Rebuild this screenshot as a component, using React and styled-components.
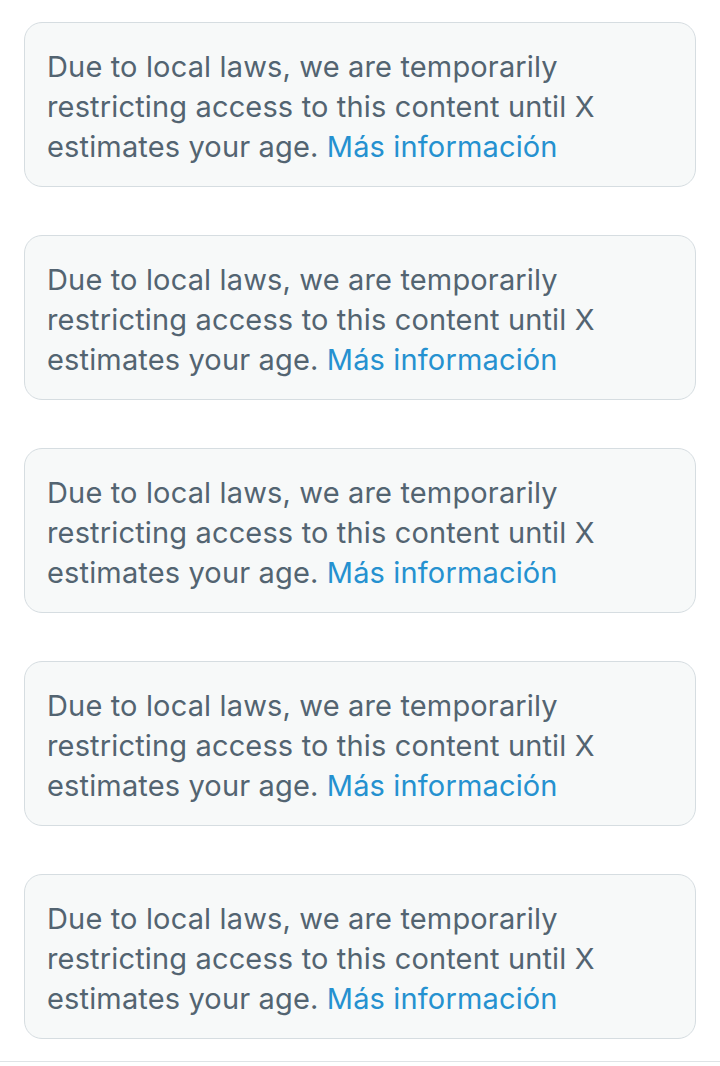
import React from "react";
import styled, { createGlobalStyle } from "styled-components";

const GlobalStyle = createGlobalStyle`
  html, body {
    margin: 0;
    padding: 0;
    background: #ffffff;
  }
`;

const Page = styled.main`
  display: flex;
  flex-direction: column;
  width: 720px;
  min-height: 1066px;
  box-sizing: border-box;
  padding-top: 22px;
  font-family: "Inter", "Noto Sans", sans-serif;
`;

const List = styled.section`
  display: flex;
  flex-direction: column;
  gap: 48px;
  padding: 0 24px;
`;

const Notice = styled.p`
  box-sizing: border-box;
  height: 165px;
  margin: 0;
  padding: 24px 40px 21px 22px;
  background: #f7f9f9;
  border: 1px solid #d6dde1;
  border-radius: 18px;
  color: #536471;
  font-size: 29px;
  line-height: 40px;
  letter-spacing: 0.15px;
`;

const Message = styled.span``;

const Link = styled.a`
  color: #2591d0;
  text-decoration: none;
`;

const Divider = styled.hr`
  margin: 22px 0 0;
  border: none;
  border-top: 1px solid #dfe3e6;
`;

const notices = [1, 2, 3, 4, 5];

export default function App() {
  return (
    <Page>
      <GlobalStyle />
      <List>
        {notices.map((n) => (
          <Notice key={n}>
            <Message>
              Due to local laws, we are temporarily restricting access to this
              content until X estimates your age.
            </Message>{" "}
            <Link href="#">Más información</Link>
          </Notice>
        ))}
      </List>
      <Divider />
    </Page>
  );
}
